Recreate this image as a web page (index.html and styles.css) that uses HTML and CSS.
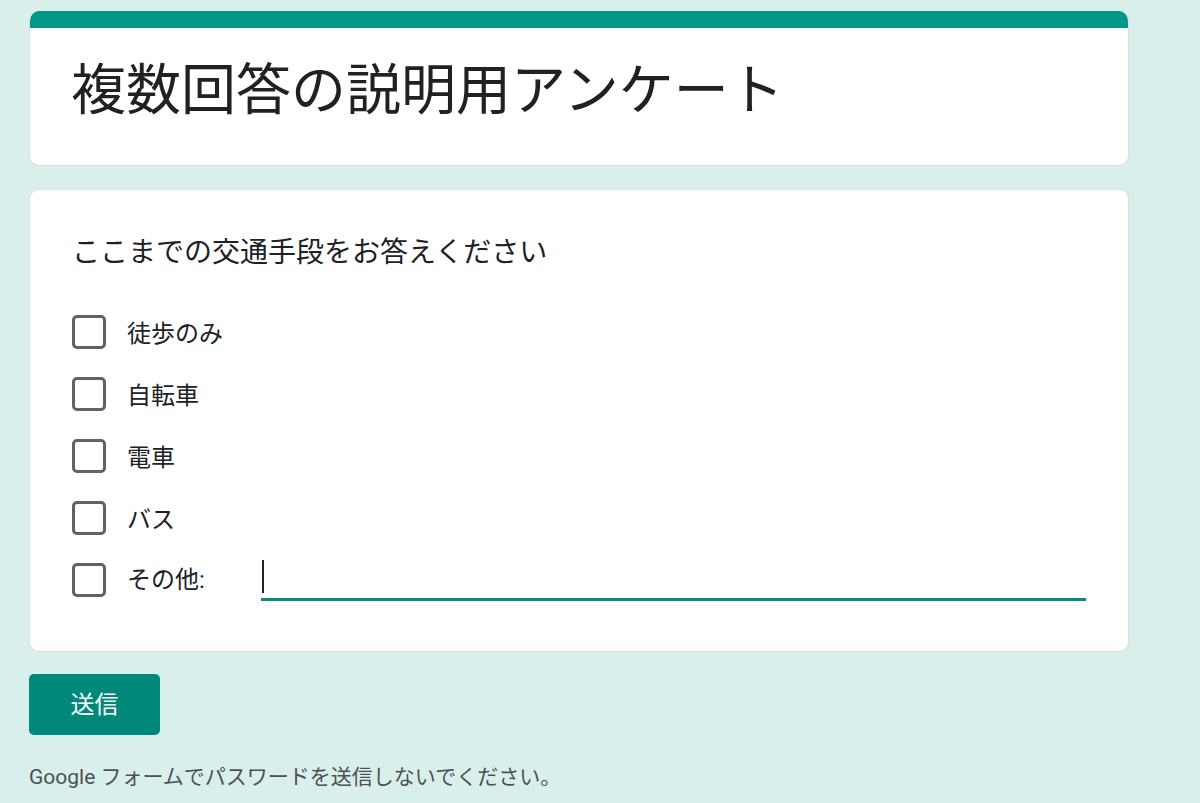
FILE: index.html
```html
<!DOCTYPE html>
<html lang="ja">
<head>
<meta charset="utf-8">
<title>複数回答の説明用アンケート</title>
<link rel="stylesheet" href="styles.css">
</head>
<body>
<main class="page">
  <section class="card card-title">
    <div class="title-bar"></div>
    <h1 class="form-title">複数回答の説明用アンケート</h1>
  </section>

  <section class="card card-question">
    <div class="question">ここまでの交通手段をお答えください</div>
    <div class="options">
      <label class="option"><span class="box"></span><span class="opt-label">徒歩のみ</span></label>
      <label class="option"><span class="box"></span><span class="opt-label">自転車</span></label>
      <label class="option"><span class="box"></span><span class="opt-label">電車</span></label>
      <label class="option"><span class="box"></span><span class="opt-label">バス</span></label>
      <div class="option option-other">
        <span class="box"></span><span class="opt-label other-label">その他:</span>
        <div class="other-input"><span class="caret"></span></div>
      </div>
    </div>
  </section>

  <button class="submit" type="button">送信</button>
  <p class="footer-note">Google フォームでパスワードを送信しないでください。</p>
</main>
</body>
</html>
```

FILE: styles.css
```css
html, body {
  margin: 0;
  padding: 0;
}
body {
  background: #d9efec;
  font-family: Roboto, "Noto Sans CJK JP", sans-serif;
  color: #202124;
}
.page {
  width: 1100px;
  padding: 11px 0 0 29px;
  display: flex;
  flex-direction: column;
  align-items: flex-start;
}
.card {
  box-sizing: border-box;
  width: 1100px;
  background: #ffffff;
  border: 1px solid #dadce0;
  border-radius: 10px;
}
.card-title {
  height: 155px;
  border-top: none;
  overflow: hidden;
  display: flex;
  flex-direction: column;
}
.title-bar {
  height: 17px;
  background: #009688;
  margin: 0 -1px;
}
.form-title {
  margin: 0;
  padding: 27px 0 0 41px;
  font-family: "Noto Sans CJK JP", sans-serif;
  font-weight: 400;
  font-size: 55px;
  line-height: 60px;
  color: #202124;
}
.card-question {
  margin-top: 23px;
  height: 463px;
  padding: 40px 42px 0 42px;
  display: flex;
  flex-direction: column;
}
.question {
  font-family: "Noto Sans CJK JP", sans-serif;
  font-size: 28px;
  line-height: 40px;
  height: 40px;
  color: #202124;
}
.options {
  margin-top: 31px;
  display: flex;
  flex-direction: column;
}
.option {
  height: 62px;
  display: flex;
  align-items: center;
}
.box {
  box-sizing: border-box;
  width: 34px;
  height: 34px;
  border: 3px solid #5f6368;
  border-radius: 5px;
  flex: none;
}
.opt-label {
  margin-left: 21px;
  font-family: "Noto Sans CJK JP", sans-serif;
  font-size: 24px;
  line-height: 32px;
  color: #202124;
}
.other-label {
  font-family: Roboto, "Noto Sans CJK JP", sans-serif;
  width: 134px;
  flex: none;
}
.other-input {
  flex: 1;
  box-sizing: border-box;
  height: 46px;
  margin-top: -4px;
  border-bottom: 3px solid #0f8a7a;
  display: flex;
  align-items: flex-end;
  padding: 0 0 5px 1px;
}
.caret {
  width: 2px;
  height: 33px;
  background: #202124;
}
.submit {
  margin-top: 22px;
  width: 131px;
  height: 61px;
  border: none;
  border-radius: 5px;
  background: #00897b;
  color: #ffffff;
  font-family: "Noto Sans CJK JP", sans-serif;
  font-size: 24px;
  line-height: 30px;
  padding: 0 0 3px 0;
}
.footer-note {
  margin: 28px 0 0 0;
  font-family: Roboto, "Noto Sans CJK JP", sans-serif;
  font-size: 21px;
  line-height: 28px;
  color: #4d5156;
}
```
